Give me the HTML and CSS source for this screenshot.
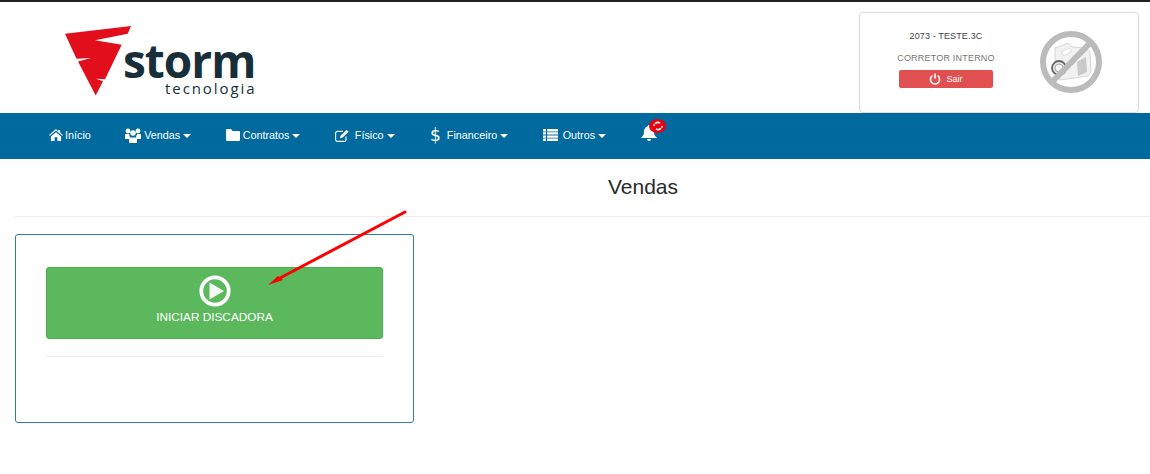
FILE: index.html
```html
<!DOCTYPE html>
<html lang="pt-BR">
<head>
  <meta charset="UTF-8">
  <meta name="viewport" content="width=device-width, initial-scale=1.0">
  <title>Vendas</title>
  <link rel="stylesheet" href="styles.css">
</head>
<body>
  <header class="topbar">
    <div class="logo">
      <svg class="logo-mark" width="68" height="72" viewBox="0 0 68 72">
        <polygon fill="#e30e1b" points="1,8.7 67,1 63.7,8.7 31,15.3 57.7,19.7 41,54.3 32,53.7 39,56.3 31.7,70.5 14,36.5 27,33 12.5,33.7"/>
      </svg>
      <div class="logo-text">
        <div class="logo-name">storm</div>
        <div class="logo-sub">tecnologia</div>
      </div>
    </div>
    <div class="user-box">
      <div class="user-info">
        <div class="user-name">2073 - TESTE.3C</div>
        <div class="user-role">CORRETOR INTERNO</div>
        <a class="btn-sair" href="#">
          <svg width="12" height="12" viewBox="0 0 12 12" fill="none" stroke="#fff" stroke-width="1.6"><path d="M3.4 2.6a4.6 4.6 0 1 0 5.2 0"/><path d="M6 .6v5"/></svg>
          Sair
        </a>
      </div>
      <svg class="user-photo" width="64" height="64" viewBox="0 0 64 64">
        <g class="camera">
          <path d="M16 18l13-5 4 4 14 1 4 4 1 20-3 4-28 4-5-12z" fill="#f1f1f1" stroke="#d6d6d6"/>
          <path d="M22 22l8-4 3 3-8 5z" fill="#fff" stroke="#ddd"/>
          <path d="M38 32l9-5 1 15-9 4z" fill="#c9c9c9"/>
          <circle cx="20" cy="38" r="7" fill="#e8e8e8" stroke="#666" stroke-width="1.8"/>
          <circle cx="20" cy="38" r="4" fill="#f6f6f6" stroke="#aaa"/>
        </g>
        <circle cx="32" cy="32" r="28" fill="none" stroke="#bbb" stroke-width="6"/>
        <path d="M13 52L52 12" stroke="#bbb" stroke-width="6"/>
      </svg>
    </div>
  </header>

  <nav class="navbar">
    <a href="#">
      <svg class="tight" width="14" height="12" viewBox="0 0 15 13" fill="#fff"><path d="M7.5 0L0 6.4l.8.9L7.5 1.7l6.7 5.6.8-.9-3-2.5V1h-2v1.7z"/><path d="M2 8l5.5-4.6L13 8v5H9V9H6v4H2z"/></svg>
      Início
    </a>
    <a href="#">
      <svg width="16" height="15" viewBox="0 0 16 15" fill="#fff"><circle cx="3" cy="3" r="2.4"/><circle cx="13" cy="3" r="2.4"/><circle cx="8" cy="5" r="2.8"/><path d="M0 6h4l1 3-1 2H0zM12 6h4v5h-4l-1-2z"/><path d="M4 9.5h8V15H4z"/></svg>
      Vendas <span class="caret"></span>
    </a>
    <a href="#">
      <svg width="14" height="12" viewBox="0 0 14 12" fill="#fff"><path d="M1 0h4l1.5 2H13a1 1 0 0 1 1 1v8a1 1 0 0 1-1 1H1a1 1 0 0 1-1-1V1a1 1 0 0 1 1-1z"/></svg>
      Contratos <span class="caret"></span>
    </a>
    <a href="#">
      <svg class="wide" width="15" height="13" viewBox="0 0 15 13" fill="none" stroke="#fff" stroke-width="1.1"><path d="M11 7.5V10.5a1.8 1.8 0 0 1-1.8 1.9H2.4A1.8 1.8 0 0 1 .6 10.5V4.2a1.8 1.8 0 0 1 1.8-1.8H8"/><path d="M5 9.2l.5-2.4L11.6.8l2 1.9-6.2 6z" fill="#fff" stroke="none"/></svg>
      Físico <span class="caret"></span>
    </a>
    <a href="#">
      <span class="dollar">$</span>
      Financeiro <span class="caret"></span>
    </a>
    <a href="#">
      <svg class="wide" width="15" height="12" viewBox="0 0 15 12" fill="#fff"><path d="M0 0h3v2.4H0zM4 0h11v2.4H4zM0 3.2h3v2.4H0zM4 3.2h11v2.4H4zM0 6.4h3v2.4H0zM4 6.4h11v2.4H4zM0 9.6h3V12H0zM4 9.6h11V12H4z"/></svg>
      Outros <span class="caret"></span>
    </a>
    <a class="bell" href="#">
      <svg width="18" height="18" viewBox="0 0 18 18" fill="#fff"><path d="M9 1a1.2 1.2 0 0 1 1.1 1.3C13 3 14 5.5 14 8c0 3 1.4 4.3 3 6H1c1.6-1.7 3-3 3-6 0-2.5 1-5 3.9-5.7A1.2 1.2 0 0 1 9 1z"/><path d="M7 15h4a2 2 0 0 1-4 0z"/></svg>
      <span class="badge">
        <svg width="10" height="10" viewBox="0 0 10 10" fill="none" stroke="#fff" stroke-width="1.6"><path d="M2 2.8a3.7 3.7 0 0 1 5-.6M8 7.2a3.7 3.7 0 0 1-5 .6"/><path d="M1 5a4 4 0 0 1 .4-1.6M9 5a4 4 0 0 1-.4 1.6"/></svg>
      </span>
    </a>
  </nav>

  <main class="content">
    <h1 class="page-title">Vendas</h1>
    <div class="panel">
      <a class="btn-iniciar" href="#">
        <svg width="32" height="32" viewBox="0 0 32 32"><circle cx="16" cy="16" r="13.7" fill="none" stroke="#fff" stroke-width="3.8"/><path d="M10.5 7.5L25 16 10.5 24.5z" fill="#f4f9f4"/></svg>
        <span>INICIAR DISCADORA</span>
      </a>
      <hr class="panel-line">
    </div>
  </main>

  <svg class="arrow" width="150" height="90" viewBox="0 0 150 90">
    <path d="M137 3L12 69" stroke="#f00" stroke-width="3" stroke-linecap="round"/>
    <path d="M0 76L10 67 15 71z" fill="#f00"/>
  </svg>
</body>
</html>
```

FILE: styles.css
```css
* {
  box-sizing: border-box;
}

html, body {
  height: 100%;
}

body {
  margin: 0;
  background: white;
  color: #333;
  font-family: "Liberation Sans", Arial, sans-serif;
  overflow: hidden;
  position: relative;
}

a {
  text-decoration: none;
}

.topbar {
  display: flex;
  justify-content: space-between;
  height: 113px;
  border-top: 2px solid #222;
  padding: 10px 11px 0 64px;
}

.logo {
  display: flex;
  align-items: flex-start;
  padding-top: 13px;
}

.logo-mark {
  margin-right: -9px;
}

.logo-text {
  margin-top: 15px;
  text-align: right;
  color: #182f3a;
}

.logo-name {
  font-family: "Open Sans", sans-serif;
  font-weight: 700;
  font-size: 46px;
  line-height: 40px;
  letter-spacing: -1px;
}

.logo-sub {
  font-family: "Open Sans", sans-serif;
  font-size: 15px;
  line-height: 16px;
  letter-spacing: 1.9px;
  margin-right: -1px;
}

.user-box {
  display: flex;
  width: 280px;
  height: 101px;
  padding: 16px 35px 0 39px;
  justify-content: space-between;
  border: 1px solid #ddd;
  border-radius: 4px;
  box-shadow: 0 0 2px rgba(0, 0, 0, 0.1);
}

.user-info {
  width: 94px;
  text-align: center;
  font-size: 9px;
}

.user-name {
  line-height: 14px;
  letter-spacing: 0.13px;
  color: #444;
  white-space: nowrap;
}

.user-role {
  margin: 8px -4px 0;
  line-height: 14px;
  letter-spacing: 0.2px;
  color: #777;
  white-space: nowrap;
}

.btn-sair {
  display: flex;
  justify-content: center;
  align-items: center;
  gap: 5px;
  height: 18px;
  margin-top: 5px;
  background: #e05050;
  border-radius: 2px;
  color: white;
}

.user-photo {
  margin-top: 1px;
}

.camera {
  filter: blur(0.5px);
}

.navbar {
  display: flex;
  align-items: center;
  height: 46px;
  padding: 0 0 2px 49px;
  background: #006a9e;
}

.navbar a {
  display: flex;
  align-items: center;
  gap: 3px;
  margin-right: 34.4px;
  color: white;
  font-size: 10.8px;
  white-space: nowrap;
}

.navbar svg.tight {
  margin-right: -1px;
}

.navbar svg.wide {
  margin-right: 2px;
}

.caret {
  width: 0;
  height: 0;
  border-left: 4px solid transparent;
  border-right: 4px solid transparent;
  border-top: 4px solid white;
  margin-top: 1px;
}

.dollar {
  font-size: 17px;
  line-height: 16px;
  margin: 0 3px 0 1px;
  font-family: "DejaVu Sans", sans-serif;
}

.navbar a.bell {
  position: relative;
  margin-top: -5px;
}

.badge {
  position: absolute;
  top: -5px;
  left: 9px;
  display: flex;
  justify-content: center;
  align-items: center;
  width: 17px;
  height: 14px;
  border-radius: 50%;
  background: #e8000f;
}

.content {
  padding-left: 15px;
}

.page-title {
  margin: 0 0 17px;
  height: 58px;
  padding: 16px 0 0 121px;
  border-bottom: 1px solid #eee;
  text-align: center;
  font-size: 21px;
  font-weight: normal;
  line-height: 24px;
  color: #2a2a2a;
}

.panel {
  width: 399px;
  height: 189px;
  padding: 32px 30px 0;
  border: 1px solid #337ab7;
  border-radius: 3px;
}

.btn-iniciar {
  display: flex;
  flex-direction: column;
  align-items: center;
  gap: 2px;
  height: 72px;
  padding-top: 7px;
  background: #5cb85c;
  border: 1px solid #4cae4c;
  border-radius: 3px;
  color: white;
  font-size: 11.8px;
  line-height: 16px;
}

.panel-line {
  margin: 17px 0 0;
  border: 0;
  border-top: 1px solid #eee;
}

.arrow {
  position: absolute;
  left: 268px;
  top: 209px;
}
```
